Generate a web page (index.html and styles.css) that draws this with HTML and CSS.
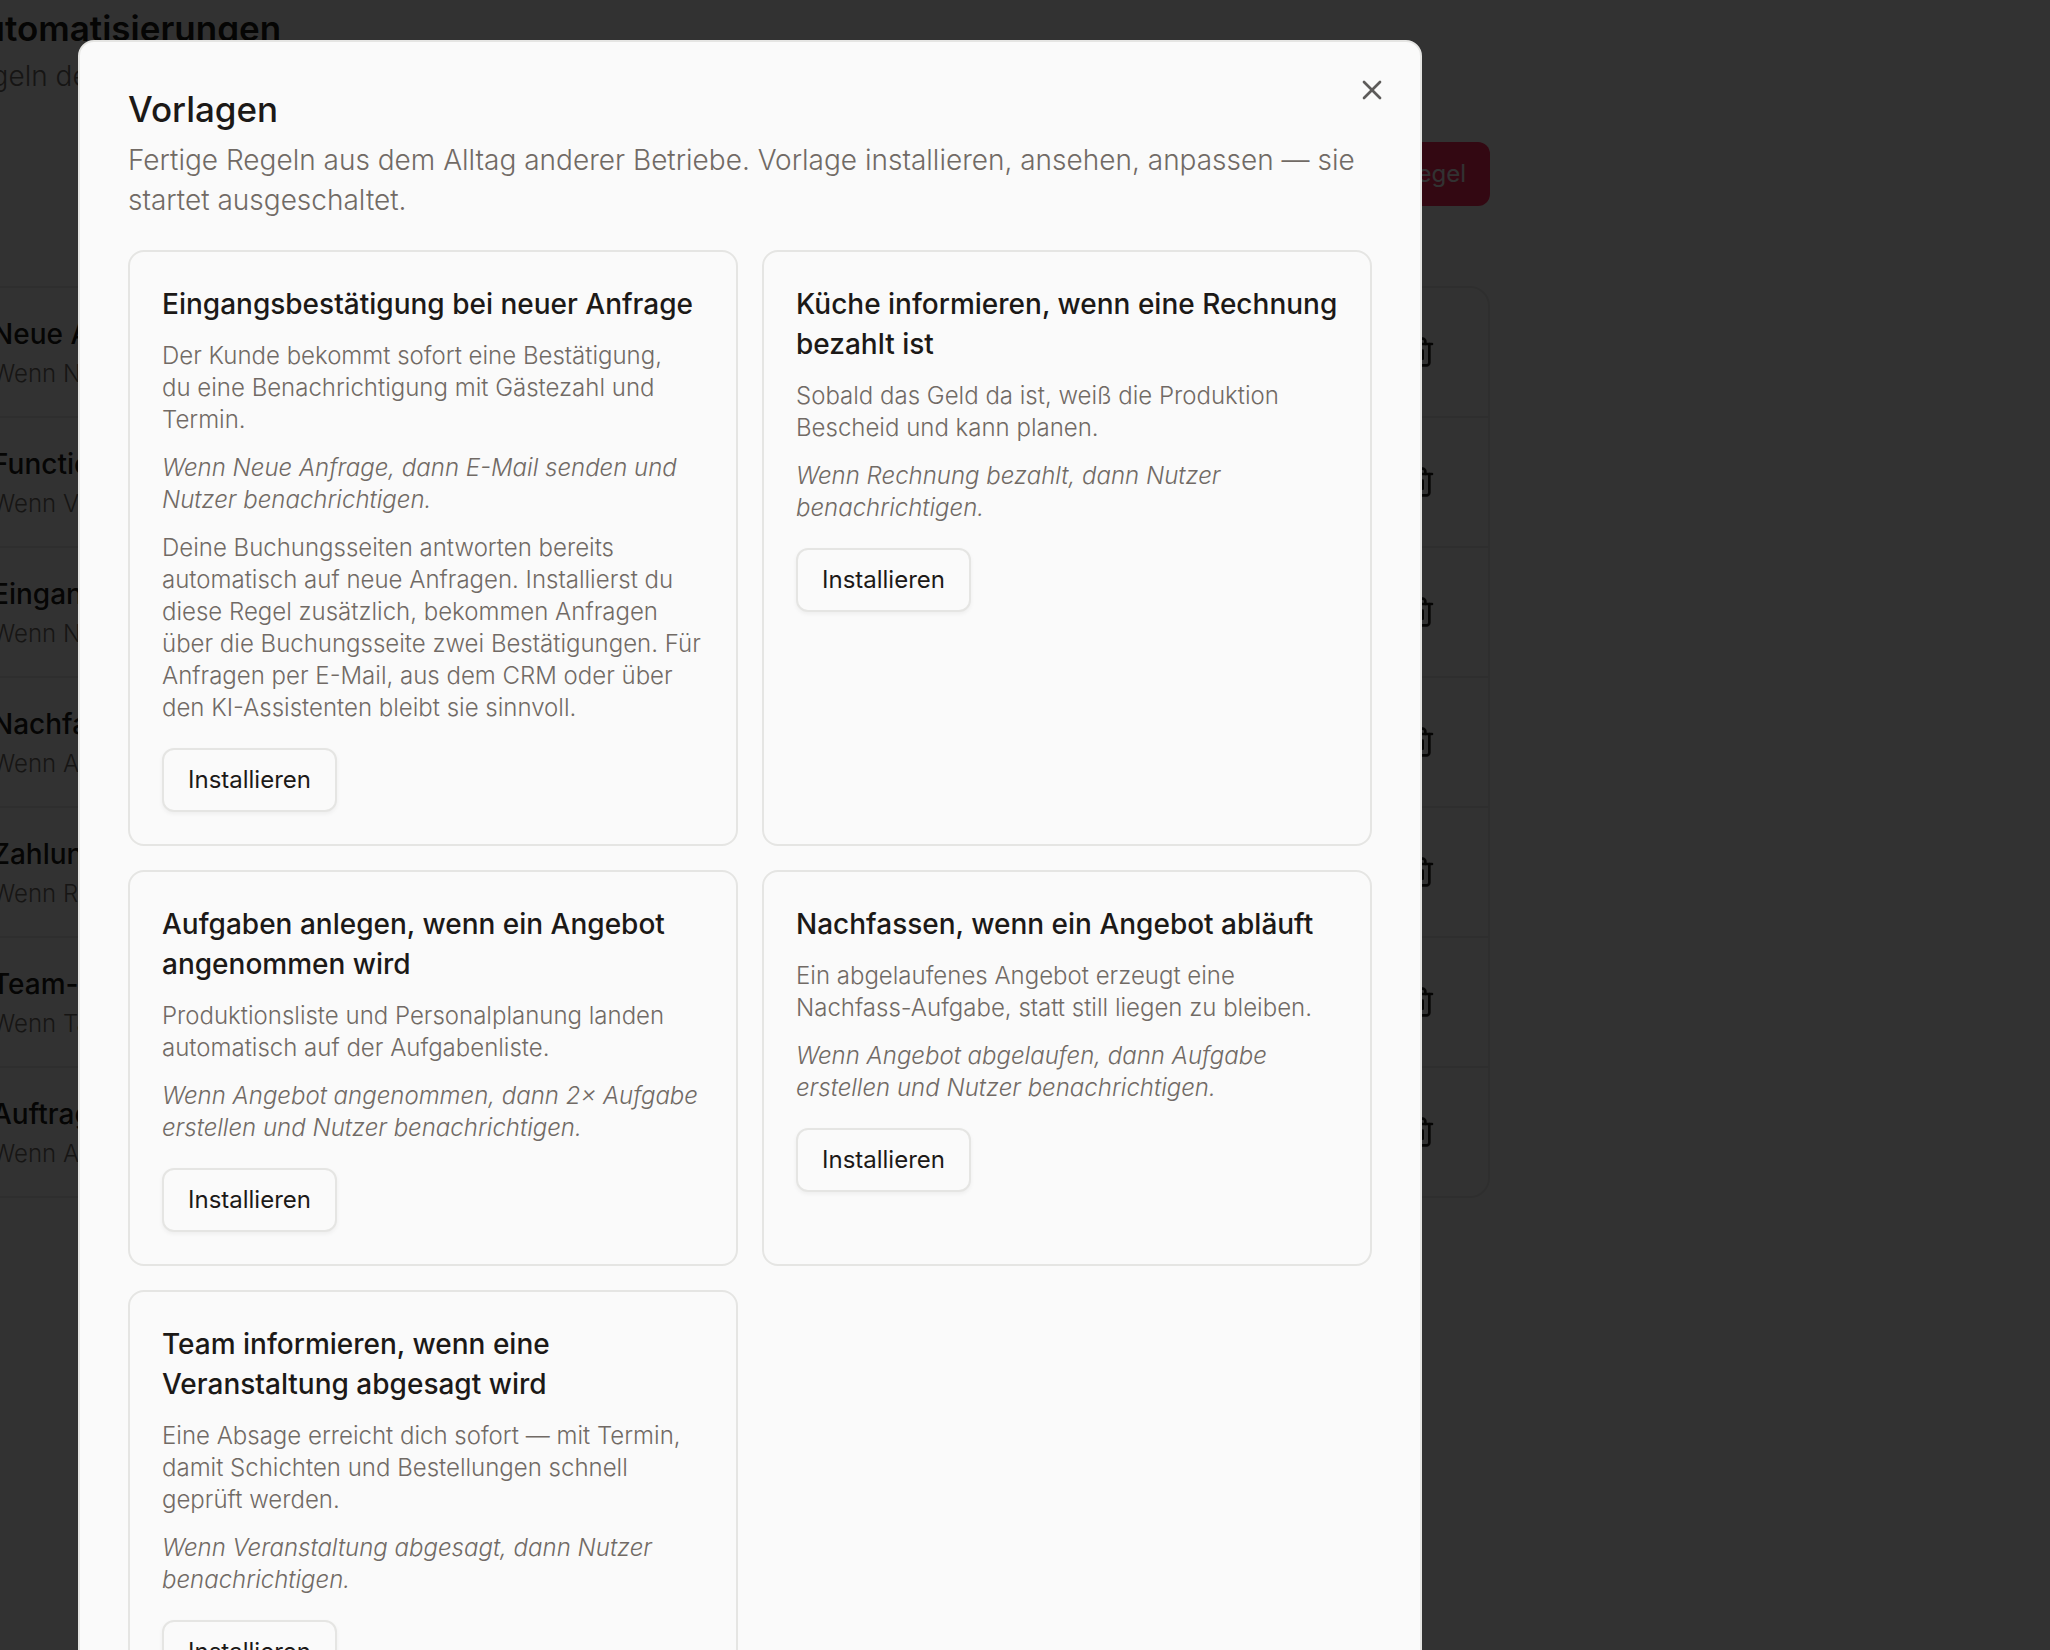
FILE: index.html
```html
<!DOCTYPE html>
<html lang="de">
<head>
    <meta charset="utf-8">
    <meta name="viewport" content="width=device-width, initial-scale=1">
    <title>Automatisierungen</title>
    <link rel="stylesheet" href="styles.css">
</head>
<body>
    <svg class="sprite" aria-hidden="true">
        <symbol id="trash" viewBox="0 0 24 24">
            <path d="M3 6h18"/>
            <path d="M19 6v14c0 1-1 2-2 2H7c-1 0-2-1-2-2V6"/>
            <path d="M8 6V4c0-1 1-2 2-2h4c1 0 2 1 2 2v2"/>
            <path d="M10 11v6"/>
            <path d="M14 11v6"/>
        </symbol>
    </svg>

    <main class="page">
        <h1 class="page-title">Automatisierungen</h1>
        <p class="page-intro">Regeln definieren</p>

        <div class="toolbar">
            <button type="button" class="btn-primary">Neue Regel</button>
        </div>

        <ul class="rules">
            <li class="rule">
                <div>
                    <h2>Neue Anfrage</h2>
                    <p>Wenn Neue Anfrage</p>
                </div>
                <button type="button" class="btn-icon" aria-label="Löschen"><svg class="icon"><use href="#trash"/></svg></button>
            </li>
            <li class="rule">
                <div>
                    <h2>Function Sheet</h2>
                    <p>Wenn Veranstaltung</p>
                </div>
                <button type="button" class="btn-icon" aria-label="Löschen"><svg class="icon"><use href="#trash"/></svg></button>
            </li>
            <li class="rule">
                <div>
                    <h2>Eingangsbestätigung</h2>
                    <p>Wenn Neue Anfrage</p>
                </div>
                <button type="button" class="btn-icon" aria-label="Löschen"><svg class="icon"><use href="#trash"/></svg></button>
            </li>
            <li class="rule">
                <div>
                    <h2>Nachfassen</h2>
                    <p>Wenn Angebot</p>
                </div>
                <button type="button" class="btn-icon" aria-label="Löschen"><svg class="icon"><use href="#trash"/></svg></button>
            </li>
            <li class="rule">
                <div>
                    <h2>Zahlung</h2>
                    <p>Wenn Rechnung</p>
                </div>
                <button type="button" class="btn-icon" aria-label="Löschen"><svg class="icon"><use href="#trash"/></svg></button>
            </li>
            <li class="rule">
                <div>
                    <h2>Team-Info</h2>
                    <p>Wenn Tag</p>
                </div>
                <button type="button" class="btn-icon" aria-label="Löschen"><svg class="icon"><use href="#trash"/></svg></button>
            </li>
            <li class="rule">
                <div>
                    <h2>Auftrag</h2>
                    <p>Wenn Angebot</p>
                </div>
                <button type="button" class="btn-icon" aria-label="Löschen"><svg class="icon"><use href="#trash"/></svg></button>
            </li>
        </ul>
    </main>

    <div class="overlay">
        <div class="dialog" role="dialog" aria-modal="true" aria-labelledby="dialog-title">
            <button type="button" class="dialog-close" aria-label="Schließen">
                <svg class="icon" viewBox="0 0 24 24"><path d="M18 6 6 18"/><path d="m6 6 12 12"/></svg>
            </button>

            <header class="dialog-header">
                <h2 id="dialog-title">Vorlagen</h2>
                <p>Fertige Regeln aus dem Alltag anderer Betriebe. Vorlage installieren, ansehen, anpassen — sie startet ausgeschaltet.</p>
            </header>

            <div class="templates">
                <article class="card">
                    <h3>Eingangsbestätigung bei neuer Anfrage</h3>
                    <p>Der Kunde bekommt sofort eine Bestätigung,<br> du eine Benachrichtigung mit Gästezahl und<br> Termin.</p>
                    <p class="summary">Wenn Neue Anfrage, dann E-Mail senden und Nutzer benachrichtigen.</p>
                    <p>Deine Buchungsseiten antworten bereits automatisch auf neue Anfragen. Installierst du diese Regel zusätzlich, bekommen Anfragen über die Buchungsseite zwei Bestätigungen. Für Anfragen per E-Mail, aus dem CRM oder über den KI-Assistenten bleibt sie sinnvoll.</p>
                    <button type="button" class="btn-outline">Installieren</button>
                </article>

                <article class="card">
                    <h3>Küche informieren, wenn eine Rechnung bezahlt ist</h3>
                    <p>Sobald das Geld da ist, weiß die Produktion Bescheid und kann planen.</p>
                    <p class="summary">Wenn Rechnung bezahlt, dann Nutzer benachrichtigen.</p>
                    <button type="button" class="btn-outline">Installieren</button>
                </article>

                <article class="card">
                    <h3>Aufgaben anlegen, wenn ein Angebot angenommen wird</h3>
                    <p>Produktionsliste und Personalplanung landen automatisch auf der Aufgabenliste.</p>
                    <p class="summary">Wenn Angebot angenommen, dann 2× Aufgabe erstellen und Nutzer benachrichtigen.</p>
                    <button type="button" class="btn-outline">Installieren</button>
                </article>

                <article class="card">
                    <h3>Nachfassen, wenn ein Angebot abläuft</h3>
                    <p>Ein abgelaufenes Angebot erzeugt eine Nachfass-Aufgabe, statt still liegen zu bleiben.</p>
                    <p class="summary">Wenn Angebot abgelaufen, dann Aufgabe erstellen und Nutzer benachrichtigen.</p>
                    <button type="button" class="btn-outline">Installieren</button>
                </article>

                <article class="card">
                    <h3>Team informieren, wenn eine Veranstaltung abgesagt wird</h3>
                    <p>Eine Absage erreicht dich sofort — mit Termin, damit Schichten und Bestellungen schnell geprüft werden.</p>
                    <p class="summary">Wenn Veranstaltung abgesagt, dann Nutzer benachrichtigen.</p>
                    <button type="button" class="btn-outline">Installieren</button>
                </article>
            </div>
        </div>
    </div>
</body>
</html>
```
FILE: styles.css
```css
:root {
    --bg: #fafafa;
    --text: #1c1917;
    --muted: #716a65;
    --border: #e5e5e3;
    --primary: #ff285a;
}

* {
    box-sizing: border-box;
}

body {
    margin: 0;
    overflow: hidden;
    background: var(--bg);
    color: var(--text);
    font-family: Inter, sans-serif;
    font-size: 28px;
    font-weight: 300;
    line-height: 40px;
}

h1, h2, h3, p, ul {
    margin: 0;
    padding: 0;
    font-size: inherit;
}

button {
    font: inherit;
    color: inherit;
    cursor: pointer;
}

.sprite {
    display: none;
}

.icon {
    display: block;
    width: 32px;
    height: 32px;
    fill: none;
    stroke: currentColor;
    stroke-width: 2;
    stroke-linecap: round;
    stroke-linejoin: round;
}

/* page behind the dialog */

.page {
    max-width: 1532px;
    margin-left: -42px;
    padding-top: 8px;
}

.page-title {
    font-size: 35px;
    font-weight: 600;
}

.page-intro {
    margin-top: 8px;
    color: var(--muted);
}

.toolbar {
    display: flex;
    justify-content: flex-end;
    margin: 46px 0 80px;
}

.btn-primary {
    height: 64px;
    padding: 0 24px;
    border: none;
    border-radius: 12px;
    background: var(--primary);
    color: var(--bg);
    font-size: 24px;
    font-weight: 400;
}

.rules {
    list-style: none;
    border: 2px solid var(--border);
    border-radius: 20px;
}

.rule {
    display: flex;
    align-items: center;
    justify-content: space-between;
    height: 130px;
    padding: 0 32px;
    border-bottom: 2px solid var(--border);
}

.rule:last-child {
    height: 128px;
    border-bottom: none;
}

.rule h2 {
    font-weight: 500;
}

.rule p {
    margin-top: 4px;
    color: var(--muted);
    font-size: 24px;
    line-height: 32px;
}

.btn-icon {
    padding: 16px 20px;
    border: none;
    background: none;
}

/* dialog */

.overlay {
    position: fixed;
    inset: 0;
    padding: 40px 78px;
    overflow: hidden;
    background: rgba(0, 0, 0, 0.8);
}

.dialog {
    position: relative;
    max-width: 1344px;
    padding: 48px;
    border: 2px solid var(--border);
    border-radius: 16px;
    background: var(--bg);
}

.dialog-close {
    position: absolute;
    top: 32px;
    right: 32px;
    padding: 0;
    border: none;
    background: none;
    opacity: 0.7;
}

.dialog-header h2 {
    font-size: 35px;
    font-weight: 500;
    line-height: 38px;
}

.dialog-header p {
    margin-top: 12px;
    color: var(--muted);
}

.templates {
    display: grid;
    grid-template-columns: 1fr 1fr;
    gap: 24px;
    margin-top: 30px;
}

.card {
    padding: 32px;
    border: 2px solid var(--border);
    border-radius: 16px;
}

.card h3 {
    font-weight: 500;
}

.card p {
    margin-top: 16px;
    color: var(--muted);
    font-size: 24px;
    line-height: 32px;
}

.card .summary {
    font-style: italic;
}

.btn-outline {
    display: block;
    height: 64px;
    margin-top: 24px;
    padding: 0 24px;
    border: 2px solid var(--border);
    border-radius: 12px;
    background: var(--bg);
    box-shadow: 0 2px 4px rgba(0, 0, 0, 0.05);
    font-size: 24px;
    font-weight: 400;
}
```
